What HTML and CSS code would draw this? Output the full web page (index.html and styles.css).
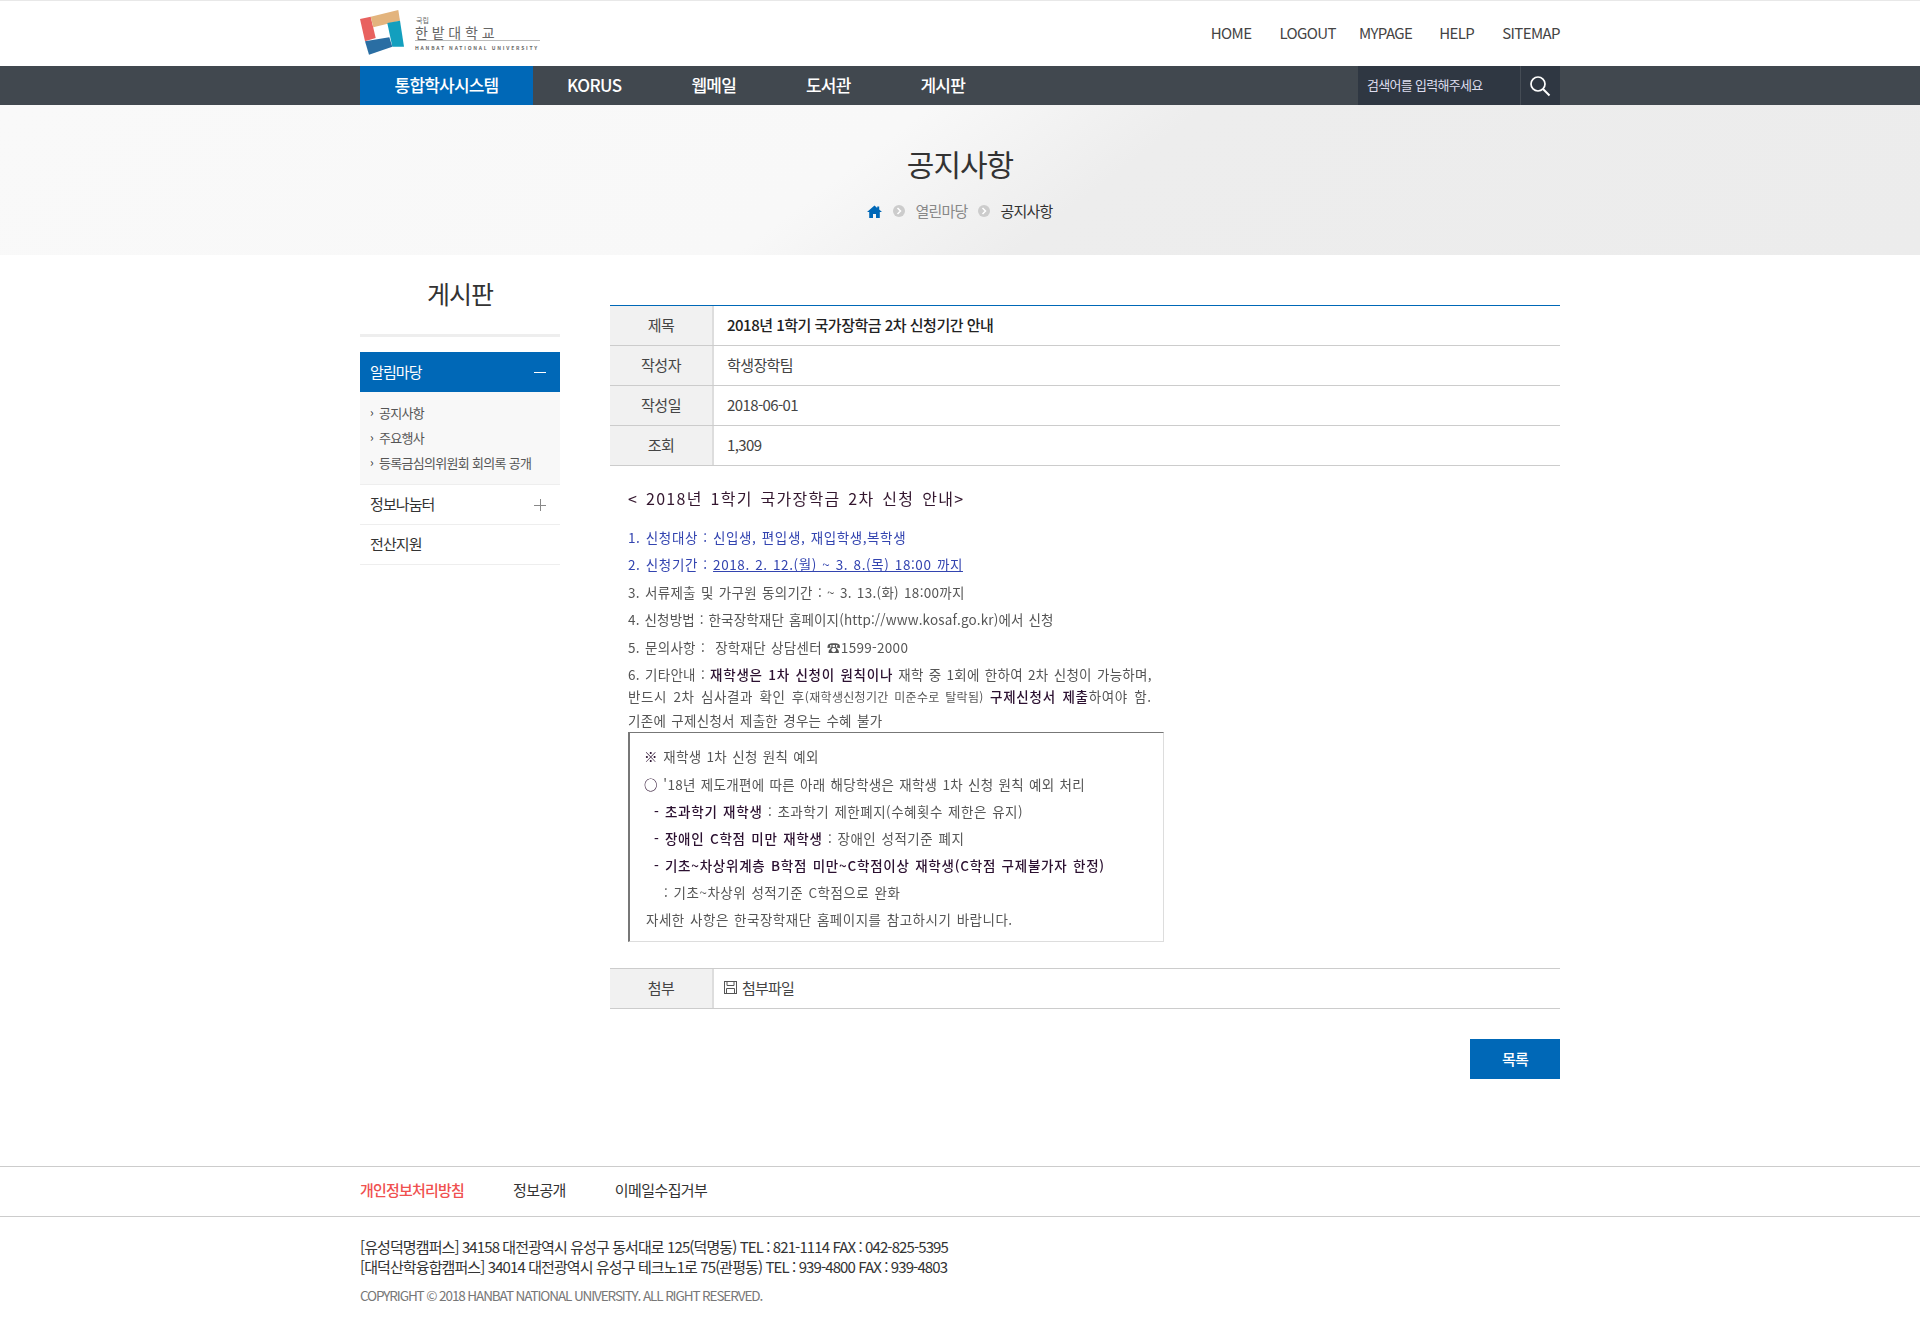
FILE: index.html
```html
<!DOCTYPE html>
<html lang="ko">
<head>
<meta charset="utf-8">
<title>공지사항</title>
<link rel="stylesheet" href="styles.css">
</head>
<body>
<header class="top">
  <div class="wrap top-in">
    <a class="logo" href="#">
      <svg class="logo-mark" width="46" height="46" viewBox="0 0 46 46">
        <polygon points="0,9 10.700,6.700 15.700,28 5,31.300" fill="#e8625f"/>
        <polygon points="10.700,6.700 38.300,0 40,10.700 13.300,17.300" fill="#e3b47d"/>
        <polygon points="27.300,13 40,10.700 44,36.700 32.300,36.700" fill="#139fbe"/>
        <polygon points="5,31.300 29.300,27.300 32.300,36.700 9,44.700" fill="#2a6ea3"/>
      </svg>
      <span class="logo-text">
        <span class="logo-small">국립</span>
        <span class="logo-ko">한밭대학교</span>
        <span class="logo-en">HANBAT NATIONAL UNIVERSITY</span>
      </span>
    </a>
    <nav class="util">
      <a href="#">HOME</a><a href="#">LOGOUT</a><a href="#">MYPAGE</a><a href="#">HELP</a><a href="#">SITEMAP</a>
    </nav>
  </div>
</header>
<div class="gnb">
  <div class="wrap gnb-in">
    <ul class="gnb-list">
      <li class="on"><a href="#">통합학사시스템</a></li>
      <li class="latin"><a href="#">KORUS</a></li>
      <li><a href="#">웹메일</a></li>
      <li><a href="#">도서관</a></li>
      <li><a href="#">게시판</a></li>
    </ul>
    <form class="search">
      <span class="search-ph">검색어를 입력해주세요</span>
      <span class="search-btn">
        <svg width="22" height="22" viewBox="0 0 22 22" fill="none" stroke="#fff"><circle cx="9" cy="9" r="7" stroke-width="1.7"/><path d="M14 14l6.500 6.500" stroke-width="2"/></svg>
      </span>
    </form>
  </div>
</div>
<section class="band">
  <h1 class="band-title">공지사항</h1>
  <div class="crumb">
    <svg class="home" width="15" height="13" viewBox="0 0 15 13"><path d="M7.500 0.500L0 7h2.200v6h3.800V9h3v4h3.800V7H15l-2.800-2.400V1.500h-2v1.400z" fill="#0068b7"/></svg>
    <svg width="12" height="12" viewBox="0 0 12 12"><circle cx="6" cy="6" r="6" fill="#ccc"/><path d="M4.500 3l3 3-3 3" fill="none" stroke="#fff" stroke-width="1.500"/></svg>
    <span class="crumb-mid">열린마당</span>
    <svg width="12" height="12" viewBox="0 0 12 12"><circle cx="6" cy="6" r="6" fill="#ccc"/><path d="M4.500 3l3 3-3 3" fill="none" stroke="#fff" stroke-width="1.500"/></svg>
    <span class="crumb-cur">공지사항</span>
  </div>
</section>
<div class="wrap main">
  <aside class="side">
    <h2 class="side-title">게시판</h2>
    <ul class="lnb">
      <li class="lnb-item open"><a href="#">알림마당<i class="minus"></i></a>
        <ul class="sub">
          <li><a href="#">공지사항</a></li>
          <li><a href="#">주요행사</a></li>
          <li><a href="#">등록금심의위원회 회의록 공개</a></li>
        </ul>
      </li>
      <li class="lnb-item"><a href="#">정보나눔터<i class="plus"></i></a></li>
      <li class="lnb-item"><a href="#">전산지원</a></li>
    </ul>
  </aside>
  <main class="content">
    <div class="view-head">
      <div class="row"><div class="th">제목</div><div class="td strong">2018년 1학기 국가장학금 2차 신청기간 안내</div></div>
      <div class="row"><div class="th">작성자</div><div class="td">학생장학팀</div></div>
      <div class="row"><div class="th">작성일</div><div class="td">2018-06-01</div></div>
      <div class="row"><div class="th">조회</div><div class="td">1,309</div></div>
    </div>
    <article class="notice">
      <p class="n-title">&lt; 2018년 1학기 국가장학금 2차 신청 안내&gt;</p>
      <p class="blue">1. 신청대상 : 신입생, 편입생, 재입학생,복학생</p>
      <p class="blue">2. 신청기간 : <u>2018. 2. 12.(월) ~ 3. 8.(목) 18:00 까지</u></p>
      <p>3. 서류제출 및 가구원 동의기간 : ~ 3. 13.(화) 18:00까지</p>
      <p class="narrow">4. 신청방법 : 한국장학재단 홈페이지(http://www.kosaf.go.kr)에서 신청</p>
      <p>5. 문의사항 :&nbsp; 장학재단 상담센터 ☎1599-2000</p>
      <p>6. 기타안내 : <b>재학생은 1차 신청이 원칙이나</b> 재학 중 1회에 한하여 2차 신청이 가능하며,</p>
      <p class="tight wide">반드시 2차 심사결과 확인 후<small>(재학생신청기간 미준수로 탈락됨)</small> <b>구제신청서 제출</b>하여야 함.</p>
      <p class="tight last">기존에 구제신청서 제출한 경우는 수혜 불가</p>
      <div class="notice-box">
        <p><b>※</b> 재학생 1차 신청 원칙 예외</p>
        <p><b>○</b> '18년 제도개편에 따른 아래 해당학생은 재학생 1차 신청 원칙 예외 처리</p>
        <p class="in1"><b>-</b> <b>초과학기 재학생</b> : 초과학기 제한폐지(수혜횟수 제한은 유지)</p>
        <p class="in1"><b>-</b> <b>장애인 C학점 미만 재학생</b> : 장애인 성적기준 폐지</p>
        <p class="in1"><b>-</b> <b>기초~차상위계층 B학점 미만~C학점이상 재학생(C학점 구제불가자 한정)</b></p>
        <p class="in2">: 기초~차상위 성적기준 C학점으로 완화</p>
        <p class="in0">자세한 사항은 한국장학재단 홈페이지를 참고하시기 바랍니다.</p>
      </div>
    </article>
    <div class="attach">
      <div class="row"><div class="th">첨부</div><div class="td file">
        <svg width="13" height="13" viewBox="0 0 13 13" fill="none" stroke="#555"><rect x=".5" y=".5" width="12" height="12"/><path d="M3 .5v4h7v-4M2.500 12.500v-5h8v5"/></svg>
        첨부파일</div></div>
    </div>
    <div class="actions"><a class="btn" href="#">목록</a></div>
  </main>
</div>
<footer class="foot">
  <div class="foot-links">
    <div class="wrap foot-links-in">
      <a class="red" href="#">개인정보처리방침</a><a href="#">정보공개</a><a href="#">이메일수집거부</a>
    </div>
  </div>
  <div class="wrap foot-info">
    <address>[유성덕명캠퍼스] 34158 대전광역시 유성구 동서대로 125(덕명동) TEL : 821-1114 FAX : 042-825-5395<br>[대덕산학융합캠퍼스] 34014 대전광역시 유성구 테크노1로 75(관평동) TEL : 939-4800 FAX : 939-4803</address>
    <p class="copy">COPYRIGHT © 2018 HANBAT NATIONAL UNIVERSITY. ALL RIGHT RESERVED.</p>
  </div>
</footer>
</body>
</html>
```
FILE: styles.css
```css
* { box-sizing: border-box; }
html, body { margin: 0; padding: 0; }
body { font-family: "Noto Sans CJK KR", "Noto Sans", sans-serif; font-weight: 400; color: #333; background: #fff; font-size: 14px; letter-spacing: -0.8px; }
a { color: inherit; text-decoration: none; }
ul { list-style: none; margin: 0; padding: 0; }
p, h1, h2 { margin: 0; }
.wrap { width: 1200px; margin: 0 auto; }

.top { height: 66px; border-top: 1px solid #e8e8e8; }
.top-in { display: flex; justify-content: space-between; align-items: center; height: 65px; }
.logo { display: flex; align-items: flex-start; gap: 9px; height: 46px; margin-top: -1px; }
.logo-mark { flex: none; }
.logo-text { display: flex; flex-direction: column; color: #666; width: 125px; line-height: 1; padding-top: 6px; }
.logo-small { font-size: 7px; line-height: 8px; letter-spacing: 0; margin-left: 1px; margin-bottom: 1px; }
.logo-ko { font-size: 14px; line-height: 14px; letter-spacing: 3.800px; border-bottom: 1px solid #bbb; padding-bottom: 1px; }
.logo-en { font-size: 5px; line-height: 6px; font-weight: 700; letter-spacing: 1.800px; margin-top: 4px; white-space: nowrap; }
.util { display: flex; font-size: 15px; color: #444; letter-spacing: -0.6px; margin-top: -2px; }
.util a:nth-child(2) { margin-left: 28px; }
.util a:nth-child(3) { margin-left: 23px; }
.util a:nth-child(4) { margin-left: 27px; }
.util a:nth-child(5) { margin-left: 28px; }

.gnb { background: #41484f; height: 39px; }
.gnb-in { display: flex; justify-content: space-between; }
.gnb-list { display: flex; }
.gnb-list a { display: block; padding: 0 35px; line-height: 38px; height: 39px; color: #fff; font-size: 17px; font-weight: 500; letter-spacing: -0.8px; }
.gnb-list .on a { background: #0068b7; width: 173px; padding: 0; text-align: center; }
.gnb-list .latin a { padding-left: 34px; letter-spacing: -0.6px; }
.search { display: flex; width: 202px; height: 39px; background: #2f3742; }
.search-ph { flex: 1; color: #dde; font-size: 13px; line-height: 38px; padding-left: 9px; letter-spacing: -0.7px; }
.search-btn { width: 40px; border-left: 1px solid #454c55; display: flex; align-items: center; justify-content: center; padding-right: 2px; }

.band { height: 150px; background: linear-gradient(143deg, #f9f9f9 0%, #f8f8f8 44%, #ededed 57%, #ececec 100%); text-align: center; padding-top: 36px; }
.band-title { font-size: 30px; font-weight: 400; line-height: 44px; color: #333; letter-spacing: -1px; }
.crumb { display: flex; justify-content: center; align-items: center; gap: 10px; margin-top: 14px; font-size: 15px; line-height: 24px; }
.home { margin-right: 1px; }
.crumb-mid { color: #888; }
.crumb-cur { color: #333; margin-left: 1px; }

.main { display: flex; justify-content: space-between; align-items: flex-start; height: 911px; }
.side { width: 200px; }
.side-title { font-size: 25px; font-weight: 400; text-align: center; line-height: 40px; padding-top: 18px; height: 82px; border-bottom: 3px solid #eee; letter-spacing: -1px; }
.lnb { margin-top: 15px; }
.lnb-item > a { display: flex; justify-content: space-between; align-items: center; height: 40px; padding: 0 14px 2px 10px; font-size: 15px; border-bottom: 1px solid #eee; color: #333; letter-spacing: -0.9px; }
.lnb-item.open > a { background: #0068b7; color: #fff; border-bottom: 0; }
.minus, .plus { display: block; width: 12px; height: 12px; position: relative; margin-top: 2px; }
.minus::before, .plus::before, .plus::after { content: ""; position: absolute; background: #fff; left: 0; right: 0; top: 6px; height: 1px; }
.plus::before, .plus::after { background: #888; }
.plus::after { left: 6px; right: auto; top: 0; width: 1px; height: 12px; }
.sub { background: #f8f8f8; padding: 8px 0 8px 19px; height: 93px; border-bottom: 1px solid #eee; font-size: 13px; color: #555; letter-spacing: -0.700px; }
.sub li { line-height: 25px; position: relative; }
.sub li::before { content: "›"; position: absolute; left: -9px; top: -1px; font-size: 12px; color: #333; }

.content { width: 950px; padding-top: 50px; }
.view-head { border-top: 1px solid #0068b7; }
.row { display: flex; height: 40px; border-bottom: 1px solid #ccc; }
.th { width: 104px; background: #f1f1f1; border-right: 2px solid #ddd; text-align: center; line-height: 37px; font-size: 15px; color: #444; letter-spacing: -0.5px; }
.td { flex: 1; line-height: 37px; padding-left: 13px; font-size: 15px; color: #444; letter-spacing: -0.6px; }
.td.strong { color: #222; font-weight: 500; letter-spacing: -0.5px; line-height: 38px; }
.file { display: flex; align-items: center; gap: 5px; padding-left: 10px; padding-bottom: 2px; letter-spacing: -0.8px; }

.notice { height: 502px; padding: 16px 0 0 18px; font-size: 13.500px; line-height: 27.400px; color: #555; letter-spacing: 0.3px; word-spacing: 1px; white-space: nowrap; filter: blur(0.3px); }
.notice b { color: #2b1030; font-weight: 500; letter-spacing: 0.750px; }
.notice small { font-size: 12px; letter-spacing: 0.300px; }
.notice .n-title { font-size: 16px; color: #33162e; letter-spacing: 1.300px; line-height: 32px; margin-bottom: 10px; word-spacing: 2px; }
.notice .blue { color: #3344b0; letter-spacing: 0.600px; }
.notice .narrow { letter-spacing: 0.150px; }
.notice .tight { line-height: 22px; }
.notice .wide { letter-spacing: 0.600px; word-spacing: 2px; margin-top: -3px; }
.notice .last { margin-top: 1px; margin-bottom: 1px; }
.notice-box { width: 536px; height: 210px; line-height: 27.100px; border: 1px solid #ddd; border-top: 1px solid #777; border-left: 2px solid #777; padding: 10px 0 0 14px; }
.notice-box .in1, .notice-box .in2, .notice-box .in0 { letter-spacing: 0.500px; }
.in1 { padding-left: 10px; }
.in2 { padding-left: 20px; }
.in0 { padding-left: 2px; }

.attach .row { border-top: 1px solid #ccc; height: 41px; }
.actions { display: flex; justify-content: flex-end; margin-top: 30px; }
.btn { display: block; width: 90px; height: 40px; line-height: 39px; text-align: center; background: #0068b7; color: #fff; font-size: 15px; font-weight: 500; }

.foot { border-top: 1px solid #ccc; }
.foot-links { height: 50px; border-bottom: 1px solid #ccc; }
.foot-links-in { display: flex; gap: 49px; line-height: 45px; font-size: 15px; letter-spacing: -0.600px; }
.red { color: #f0504f; font-weight: 500; letter-spacing: -0.800px; }
.foot-info { padding-top: 20px; }
address { font-style: normal; font-size: 15px; line-height: 20px; color: #333; letter-spacing: -0.900px; }
.copy { color: #777; font-size: 13.500px; line-height: 20px; margin-top: 8px; letter-spacing: -1.100px; }
```
